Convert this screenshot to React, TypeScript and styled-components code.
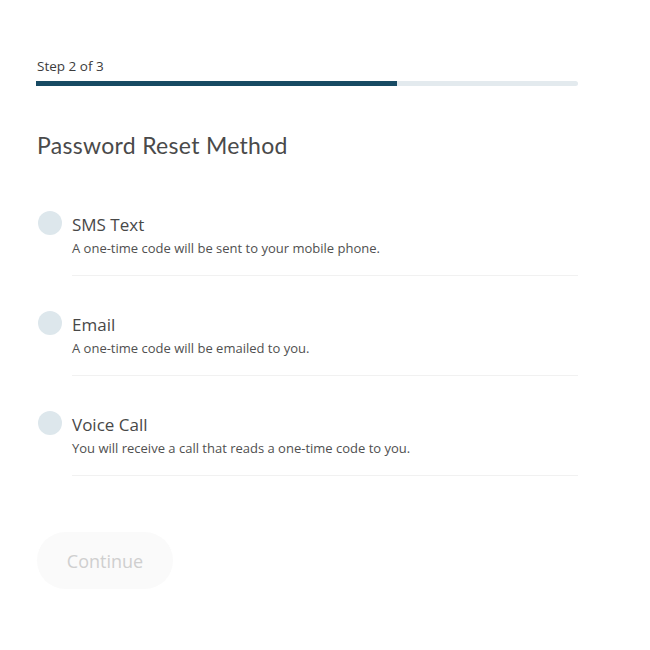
import React, { FC } from 'react';
import styled, { createGlobalStyle } from 'styled-components';

const GlobalStyle = createGlobalStyle`
  html, body {
    margin: 0;
    padding: 0;
    background: #fff;
  }

  body {
    font-family: 'Open Sans', 'Liberation Sans', sans-serif;
    color: #444;
  }
`;

interface Method {
  id: string;
  label: string;
  description: string;
}

const methods: Method[] = [
  {
    id: 'sms',
    label: 'SMS Text',
    description: 'A one-time code will be sent to your mobile phone.',
  },
  {
    id: 'email',
    label: 'Email',
    description: 'A one-time code will be emailed to you.',
  },
  {
    id: 'voice',
    label: 'Voice Call',
    description: 'You will receive a call that reads a one-time code to you.',
  },
];

const Page = styled.main`
  width: 542px;
  padding: 57px 0 0 36px;
`;

const StepLabel = styled.div`
  font-size: 13.5px;
  line-height: 18px;
  color: #3c3c3c;
  padding-left: 1px;
`;

const Track = styled.div`
  margin-top: 6px;
  height: 5px;
  background-color: #e3eaee;
  border-radius: 0 3px 3px 0;
  overflow: hidden;
`;

const Fill = styled.div`
  height: 100%;
  background-color: #174a63;
`;

const Title = styled.h1`
  margin: 45px 0 0 1px;
  font-family: Lato, 'Open Sans', sans-serif;
  font-weight: 400;
  font-size: 23px;
  line-height: 28px;
  letter-spacing: 0.3px;
  color: #4a4a4a;
`;

const List = styled.ul`
  list-style: none;
  margin: 47px 0 0;
  padding: 0;
`;

const Row = styled.li`
  display: flex;
  align-items: flex-start;
  gap: 10px;
  height: 100px;
`;

const Radio = styled.span`
  flex: none;
  width: 24px;
  height: 24px;
  margin: 5px 0 0 2px;
  border-radius: 50%;
  background-color: #dde7ec;
`;

const Content = styled.div`
  flex: 1;
  padding-top: 8px;
  height: 61px;
  border-bottom: 1px solid #f1f1f1;
`;

const Label = styled.div`
  font-size: 17px;
  line-height: 22px;
  color: #484848;
`;

const Description = styled.div`
  margin-top: 3px;
  font-size: 13px;
  line-height: 18px;
  color: #505050;
`;

const Button = styled.button`
  margin-top: 26px;
  margin-left: 1px;
  width: 136px;
  height: 57px;
  border: none;
  border-radius: 29px;
  background-color: #fafafa;
  color: #cfcfcf;
  font-family: 'Open Sans', sans-serif;
  font-size: 18px;
  cursor: default;
`;

const MethodRow: FC<{ method: Method }> = ({ method }) => (
  <Row>
    <Radio />
    <Content>
      <Label>{method.label}</Label>
      <Description>{method.description}</Description>
    </Content>
  </Row>
);

const App: FC = () => {
  const progress = (397 - 36) / 542;

  return (
    <>
      <GlobalStyle />
      <Page>
        <StepLabel>Step 2 of 3</StepLabel>
        <Track>
          <Fill style={{ width: `${progress * 100}%` }} />
        </Track>
        <Title>Password Reset Method</Title>
        <List>
          {methods.map((method) => (
            <MethodRow key={method.id} method={method} />
          ))}
        </List>
        <Button disabled>Continue</Button>
      </Page>
    </>
  );
};

export default App;
